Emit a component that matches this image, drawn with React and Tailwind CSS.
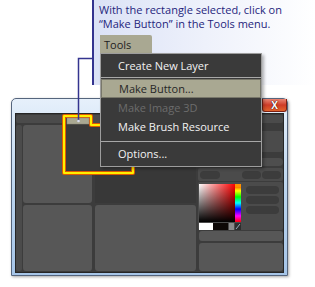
function Pill({ className }) {
  return <div className={`h-[8px] rounded-full bg-[#3c3c3c] ${className}`} />
}

function ColorPanel() {
  return (
    <div className="flex h-[48px] gap-[5px] rounded-[2px] bg-[#4b4b4b] pl-[1px] pt-[2px]">
      <div className="flex flex-col">
        <div className="flex">
          <div className="h-[38px] w-[36px] bg-[linear-gradient(to_top,#000,transparent),linear-gradient(to_right,#fff,#f00)]" />
          <div className="relative h-[38px] w-[6px] bg-[linear-gradient(to_bottom,#f00,#ff0_18%,#0f0_34%,#0ff_50%,#00f_66%,#f0f_84%,#f00)]">
            <div className="absolute left-0 top-0 h-[3px] w-[6px] bg-[#ff9000]" />
          </div>
        </div>
        <div className="mt-px flex h-[7px]">
          <div className="w-[14px] bg-white" />
          <div className="w-[15px] bg-[#0d0806]" />
          <div className="ml-px w-[5px] bg-[#8a8a8a]" />
          <div className="ml-px flex w-[6px] items-center justify-center bg-[#2e2e2e]">
            <svg width="6" height="7" viewBox="0 0 6 7">
              <line x1="1" y1="6" x2="5" y2="1" stroke="#9ab" strokeWidth="1" />
            </svg>
          </div>
        </div>
      </div>
      <div className="flex flex-col gap-[2px] pt-[2px]">
        <Pill className="w-[33px]" />
        <Pill className="w-[33px]" />
        <Pill className="w-[33px]" />
      </div>
    </div>
  )
}

function Window() {
  return (
    <div className="flex h-[178px] w-[277px] flex-col rounded-t-[5px] border border-[#55657d] bg-gradient-to-b from-[#e6f0fb] via-[#bdd6ef] to-[#a6c5e8] shadow-[1px_1px_3px_rgba(0,0,0,0.35)]">
      <div className="flex h-[14px] justify-end">
        <div className="flex h-[13px] w-[25px] items-center justify-center rounded-b-[3px] border border-t-0 border-[#7b2013] bg-gradient-to-b from-[#e98473] via-[#cf3a26] to-[#e2632c] text-[10px] font-bold leading-none text-white [text-shadow:0_0_1px_#300,0_0_1px_#300]">
          X
        </div>
      </div>
      <div className="mx-[3px] mb-[2px] flex flex-1 flex-col border border-[#262626] bg-[#3c3c3c]">
        <div className="mt-px h-[8px] rounded-[2px] bg-[#4b4b4b]" />
        <div className="mt-[2px] flex flex-1 pb-px">
          <div className="w-[6px] rounded-[2px] bg-[#4b4b4b]" />
          <div className="ml-px flex w-[69px] flex-col gap-[2px]">
            <div className="h-[78px] rounded-[3px] bg-[#575757]" />
            <div className="flex-1 rounded-[3px] bg-[#575757]" />
          </div>
          <div className="ml-[3px] flex w-[101px] flex-col gap-[2px]">
            <div className="h-[78px] bg-[#383838]" />
            <div className="flex-1 rounded-[3px] bg-[#575757]" />
          </div>
          <div className="ml-[2px] flex w-[85px] flex-col">
            <div className="mt-[6px] h-[21px] rounded-[2px] bg-[#4b4b4b]" />
            <div className="mt-[6px] h-[8px] rounded-full bg-[#4e4e4e]" />
            <div className="mt-[2px] flex h-[13px] items-center rounded-[2px] bg-[#4b4b4b] px-[2px]">
              <Pill className="w-[20px]" />
              <Pill className="ml-auto w-[19px]" />
              <Pill className="ml-px w-[19px]" />
            </div>
            <div className="mt-px">
              <ColorPanel />
            </div>
            <div className="ml-px mt-px h-[10px] rounded-[3px] bg-[#575757]" />
            <div className="ml-px mt-[2px] flex-1 rounded-[3px] bg-[#575757]" />
          </div>
        </div>
      </div>
    </div>
  )
}

function MenuItem({ children, tone = 'normal' }) {
  const tones = {
    normal: 'text-[#f2f2f2]',
    active: 'border border-[#78776a] bg-[#a9a892] text-[#262626]',
    disabled: 'text-[#6c6c6c]',
  }
  return <div className={`flex h-[19px] items-center pl-[17px] ${tones[tone]}`}>{children}</div>
}

function ToolsMenu() {
  return (
    <div className="absolute left-[100px] top-[35px] text-[11px] leading-none">
      <div className="flex h-[18px] w-[52px] items-center rounded-tr-[2px] bg-[#a9a892] pl-[4px] text-[#222]">Tools</div>
      <div className="w-[162px] border border-[#9d9d9d] bg-[#3a3a3a] pb-[3px] shadow-[2px_2px_3px_rgba(0,0,0,0.3)]">
        <div className="flex h-[23px] items-center pl-[17px] text-[#f2f2f2]">Create New Layer</div>
        <div className="h-px bg-[#a8a8a8]" />
        <div className="mt-px">
          <MenuItem tone="active">Make Button...</MenuItem>
        </div>
        <MenuItem tone="disabled">Make Image 3D</MenuItem>
        <MenuItem>Make Brush Resource</MenuItem>
        <div className="mt-[5px] h-px bg-[#a8a8a8]" />
        <div className="mt-[2px]">
          <MenuItem>Options...</MenuItem>
        </div>
      </div>
    </div>
  )
}

export default function App() {
  return (
    <div className="relative h-[287px] w-[315px] overflow-hidden bg-white font-['Open_Sans','Noto_Sans',sans-serif]">
      <div className="absolute left-[92px] top-0 h-[85px] w-[223px] border-l-2 border-[#34348f] bg-gradient-to-r from-[#dbe2f6] via-[#eef1fb] to-white pl-[5px] pt-[3px] text-[11px] leading-[14px] text-[#25257c]">
        <p>With the rectangle selected, click on</p>
        <p>“Make Button” in the Tools menu.</p>
      </div>

      <div className="pl-[11px] pt-[98px]">
        <Window />
      </div>

      <svg className="pointer-events-none absolute left-0 top-0" width="315" height="287" viewBox="0 0 315 287">
        <path d="M64 116 H91 V125 H133 V173 H64 Z" fill="#3a3a3a" stroke="#e05a00" strokeWidth="4" strokeLinejoin="round" />
        <path d="M64 116 H91 V125 H133 V173 H64 Z" fill="none" stroke="#ffef00" strokeWidth="2" strokeLinejoin="round" />
        <rect x="67" y="118" width="22" height="6" fill="#a9a892" stroke="#8c8b78" strokeWidth="0.5" />
        <path d="M93 58.5 H78.5 V121" fill="none" stroke="#34348f" strokeWidth="1.5" />
        <circle cx="78.5" cy="121" r="1.3" fill="#d8dcf0" />
      </svg>

      <ToolsMenu />
    </div>
  )
}
